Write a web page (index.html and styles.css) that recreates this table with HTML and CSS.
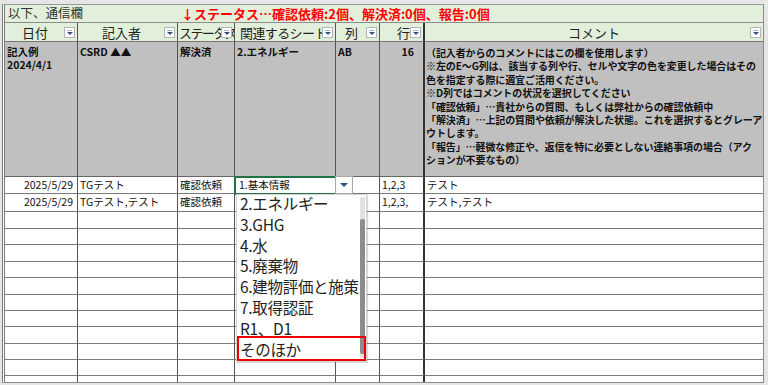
FILE: index.html
```html
<!DOCTYPE html>
<html lang="ja">
<head>
<meta charset="utf-8">
<link rel="stylesheet" href="styles.css">
</head>
<body>
<div class="frame">
  <div class="sheet">
    <div class="title">
      <span class="title-left">以下、通信欄</span>
      <span class="title-red">↓ステータス…確認依頼:2個、解決済:0個、報告:0個</span>
    </div>

    <div class="hd c-date"><span class="lbl">日付</span><i class="fb"></i></div>
    <div class="hd"><span class="lbl">記入者</span><i class="fb"></i></div>
    <div class="hd"><span class="lbl lbl-left tight">ステータス</span><i class="fb"></i></div>
    <div class="hd"><span class="lbl lbl-left semi">関連するシート</span><i class="fb"></i></div>
    <div class="hd"><span class="lbl">列</span><i class="fb"></i></div>
    <div class="hd thick"><span class="lbl lbl-right">行</span><i class="fb"></i></div>
    <div class="hd last"><span class="lbl">コメント</span><i class="fb"></i></div>

    <div class="ex">記入例<br>2024/4/1</div>
    <div class="ex">CSRD ▲▲</div>
    <div class="ex">解決済</div>
    <div class="ex">2.エネルギー</div>
    <div class="ex">AB</div>
    <div class="ex thick num">16</div>
    <div class="ex last comment">（記入者からのコメントにはこの欄を使用します）<br>※左のE～G列は、該当する列や行、セルや文字の色を変更した場合はその<br>色を指定する際に適宜ご活用ください。<br>※D列ではコメントの状況を選択してください<br>「確認依頼」…貴社からの質問、もしくは弊社からの確認依頼中<br>「解決済」…上記の質問や依頼が解決した状態。これを選択するとグレーア<br>ウトします。<br>「報告」…軽微な修正や、返信を特に必要としない連絡事項の場合（アク<br>ションが不要なもの）</div>

    <div class="cd r">2025/5/29</div><div class="cd">TGテスト</div><div class="cd">確認依頼</div><div class="cd sel">1.基本情報<span class="ddbtn"><i class="tri"></i></span></div><div class="cd"></div><div class="cd thick">1,2,3</div><div class="cd last">テスト</div>
    <div class="cd r">2025/5/29</div><div class="cd">TGテスト,テスト</div><div class="cd">確認依頼</div><div class="cd"></div><div class="cd"></div><div class="cd thick">1,2,3,</div><div class="cd last">テスト,テスト</div>
    <div class="cd"></div><div class="cd"></div><div class="cd"></div><div class="cd"></div><div class="cd"></div><div class="cd thick"></div><div class="cd last"></div>
    <div class="cd"></div><div class="cd"></div><div class="cd"></div><div class="cd"></div><div class="cd"></div><div class="cd thick"></div><div class="cd last"></div>
    <div class="cd"></div><div class="cd"></div><div class="cd"></div><div class="cd"></div><div class="cd"></div><div class="cd thick"></div><div class="cd last"></div>
    <div class="cd"></div><div class="cd"></div><div class="cd"></div><div class="cd"></div><div class="cd"></div><div class="cd thick"></div><div class="cd last"></div>
    <div class="cd"></div><div class="cd"></div><div class="cd"></div><div class="cd"></div><div class="cd"></div><div class="cd thick"></div><div class="cd last"></div>
    <div class="cd"></div><div class="cd"></div><div class="cd"></div><div class="cd"></div><div class="cd"></div><div class="cd thick"></div><div class="cd last"></div>
    <div class="cd"></div><div class="cd"></div><div class="cd"></div><div class="cd"></div><div class="cd"></div><div class="cd thick"></div><div class="cd last"></div>
    <div class="cd"></div><div class="cd"></div><div class="cd"></div><div class="cd"></div><div class="cd"></div><div class="cd thick"></div><div class="cd last"></div>
    <div class="cd"></div><div class="cd"></div><div class="cd"></div><div class="cd"></div><div class="cd"></div><div class="cd thick"></div><div class="cd last"></div>
    <div class="cd"></div><div class="cd"></div><div class="cd"></div><div class="cd"></div><div class="cd"></div><div class="cd thick"></div><div class="cd last"></div>
    <div class="cd nob"></div><div class="cd nob"></div><div class="cd nob"></div><div class="cd nob"></div><div class="cd nob"></div><div class="cd nob thick"></div><div class="cd nob last"></div>

    <div class="dropdown">
      <div class="item">2.エネルギー</div>
      <div class="item">3.GHG</div>
      <div class="item">4.水</div>
      <div class="item">5.廃棄物</div>
      <div class="item">6.建物評価と施策</div>
      <div class="item">7.取得認証</div>
      <div class="item">R1、D1</div>
      <div class="item">そのほか</div>
      <div class="track"><div class="thumb"></div></div>
      <div class="highlight"></div>
    </div>
  </div>
</div>
</body>
</html>
```

FILE: styles.css
```css
* { box-sizing: border-box; margin: 0; padding: 0; }

html, body {
  width: 768px;
  height: 385px;
  overflow: hidden;
  background: #e6e6e6;
}

body {
  font-family: "Noto Sans CJK JP", "Noto Sans", sans-serif;
  color: #111;
  padding: 4px 0 0 2px;
}

.frame {
  width: 762px;
  height: 379px;
  border-top: 1px solid #9a9a9a;
  border-left: 3px double #7a7a7a;
  border-right: 1px solid #8a8a8a;
  border-bottom: 1px solid #8a8a8a;
  background: #fff;
  overflow: hidden;
}

.sheet {
  position: relative;
  display: grid;
  grid-template-columns: 73px 100px 57px 101px 44px 45px 1fr;
  grid-template-rows: 18px 19px 135px 17px 18px 17px 16px 17px 16px 17px 16px 16px 17px 16px 16px 6px;
}

.title {
  grid-column: 1 / -1;
  background: #e2efda;
  border-bottom: 1px solid #8c8c8c;
  display: flex;
  align-items: center;
  font-size: 12.5px;
  line-height: 1;
  white-space: nowrap;
}
.title-left { color: #333; padding-left: 3px; width: 176px; }
.title-red { color: #ff0000; font-weight: 700; font-size: 13px; }

.hd {
  position: relative;
  background: #e2efda;
  border-right: 1px solid #555;
  border-bottom: 1px solid #777;
  font-size: 13px;
  color: #222;
  display: flex;
  align-items: center;
  justify-content: center;
  overflow: hidden;
  white-space: nowrap;
  padding-right: 12px;
}
.hd .lbl { line-height: 1; }
.hd .lbl-left { position: absolute; left: 2px; }
.hd .lbl-right { position: absolute; right: 13px; }
.hd .tight { letter-spacing: -1.6px; left: 1px; }
.hd .semi { letter-spacing: -0.6px; left: 5px; }
.hd.last { padding-right: 0; }

.fb {
  position: absolute;
  right: 2px;
  top: 4px;
  width: 11px;
  height: 11px;
  background: #fff;
  border: 1px solid #b4b4b4;
}
.fb::after {
  content: "";
  position: absolute;
  left: 2px;
  top: 4px;
  border-left: 3px solid transparent;
  border-right: 3px solid transparent;
  border-top: 3px solid #2e4e86;
}
.fb::before {
  content: "";
  position: absolute;
  left: 2px;
  top: 2px;
  width: 5px;
  height: 1px;
  background: #9fb1cf;
}

.thick { border-right: 2px solid #333 !important; }
.last { border-right: none !important; }

.ex {
  background: #c0c0c0;
  border-right: 1px solid #555;
  border-bottom: 1px solid #666;
  font-size: 10.5px;
  font-weight: 700;
  line-height: 13.4px;
  padding: 3px 2px 0 2px;
  white-space: nowrap;
  overflow: hidden;
  color: #111;
}
.ex.num { text-align: right; padding-right: 9px; }
.ex.comment {
  font-size: 10px;
  letter-spacing: -0.1px;
  padding-left: 1px;
  padding-top: 4px;
}

.cd {
  position: relative;
  border-right: 1px solid #555;
  border-bottom: 1px solid #7a7a7a;
  font-size: 10.5px;
  line-height: 15px;
  padding: 0 2px;
  white-space: nowrap;
  color: #111;
}
.cd.r { text-align: right; padding-right: 4px; }
.cd.nob { border-bottom: none; }

.sel {
  outline: 2px solid #217346;
  outline-offset: -1px;
  padding-left: 4px;
  z-index: 2;
}

.ddbtn {
  position: absolute;
  left: 100%;
  top: -1px;
  width: 18px;
  height: 18px;
  background: #fff;
  border: 1px solid #a8a8a8;
  z-index: 3;
}
.ddbtn .tri {
  position: absolute;
  left: 4px;
  top: 6px;
  border-left: 4px solid transparent;
  border-right: 4px solid transparent;
  border-top: 4px solid #2e4e86;
}

.dropdown {
  position: absolute;
  left: 231px;
  top: 189px;
  width: 131px;
  height: 168px;
  background: #fff;
  border: 1px solid #d4d4d4;
  box-shadow: 1px 1px 1px rgba(0,0,0,0.15);
  z-index: 5;
  padding-top: 0;
}
.item {
  height: 20.8px;
  line-height: 17px;
  font-size: 15.5px;
  padding-left: 3px;
  color: #222;
  white-space: nowrap;
  letter-spacing: -0.3px;
}
.track {
  position: absolute;
  right: 1px;
  top: 2px;
  bottom: 3px;
  width: 5px;
  background: #e2e2e2;
  border-radius: 2px;
}
.thumb {
  position: absolute;
  left: 0;
  right: 0;
  top: 22px;
  bottom: 4px;
  background: #8c8c8c;
  border-radius: 2px;
}
.highlight {
  position: absolute;
  left: 0;
  top: 141px;
  width: 129px;
  height: 25px;
  border: 2.5px solid #ee0000;
}
```
